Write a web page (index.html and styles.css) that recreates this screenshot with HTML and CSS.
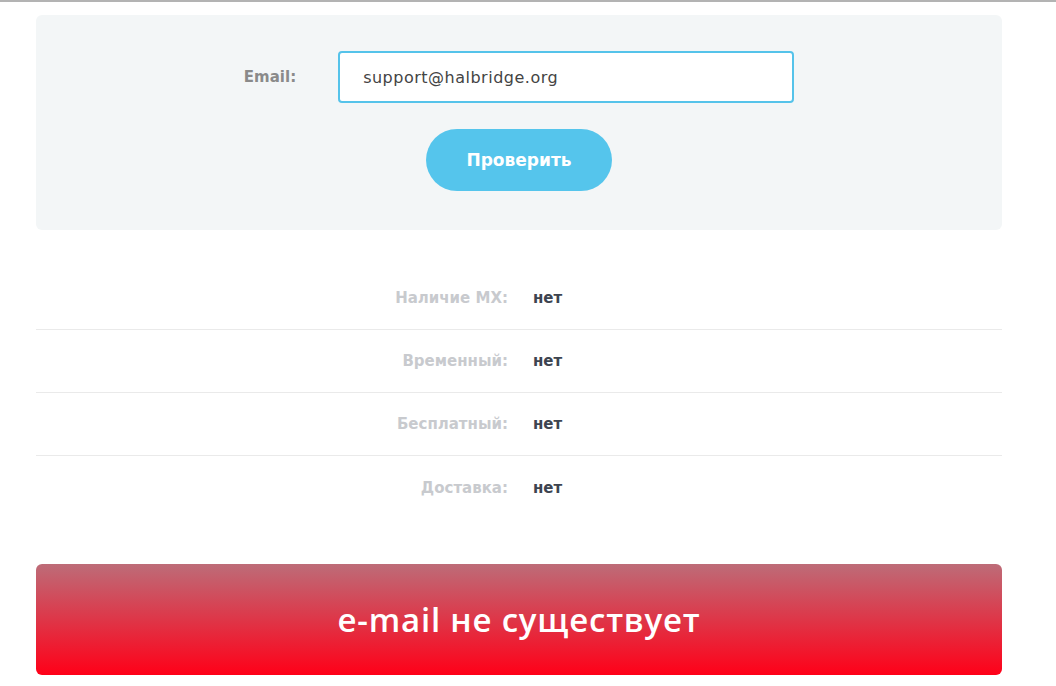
FILE: index.html
```html
<!DOCTYPE html>
<html lang="ru">
  <head>
    <meta charset="UTF-8" />
    <meta name="viewport" content="width=device-width, initial-scale=1.0" />
    <link rel="stylesheet" href="styles.css">
    <title>Проверка e-mail</title>
  </head>
  <body>
    <div class="page">
      <form class="check" onsubmit="return false" novalidate autocapitalize="off">
        <div class="field">
          <label for="email" class="info">Email:</label>
          <input type="email" id="email" class="sub" value="support@halbridge.org" />
        </div>
        <div class="btn">
          <button type="submit">Проверить</button>
        </div>
      </form>

      <div class="result">
        <div class="row">
          <span class="name">Наличие MX:</span>
          <span class="val">нет</span>
        </div>
        <div class="row">
          <span class="name">Временный:</span>
          <span class="val">нет</span>
        </div>
        <div class="row">
          <span class="name">Бесплатный:</span>
          <span class="val">нет</span>
        </div>
        <div class="row">
          <span class="name">Доставка:</span>
          <span class="val">нет</span>
        </div>
      </div>

      <div class="status">e-mail не существует</div>
    </div>
  </body>
</html>
```

FILE: styles.css
```css
* {
  margin: 0;
  padding: 0;
  box-sizing: border-box;
}
body {
  font-family: "DejaVu Sans", "Open Sans", sans-serif;
  border-top: 2px solid rgb(179, 179, 179);
  background: #fff;
}
.page {
  width: 966px;
  margin: 13px 36px 0;
}
.check {
  background-color: rgb(243, 246, 247);
  border-radius: 6px;
  padding: 36px 0 39px;
}
.check .field {
  display: flex;
  align-items: center;
  justify-content: center;
  gap: 40px;
}
.check .info {
  font-size: 15px;
  font-weight: 600;
  color: rgb(138, 138, 138);
  margin-right: 2px;
}
.check .sub {
  width: 456px;
  height: 52px;
  padding: 0 23px;
  border: 2px solid rgb(85, 195, 234);
  border-radius: 4px;
  font-family: "DejaVu Sans", sans-serif;
  font-size: 16px;
  letter-spacing: 0.5px;
  color: rgb(68, 68, 68);
  outline: none;
}
.check .btn {
  display: flex;
  justify-content: center;
  margin-top: 26px;
}
.check button {
  width: 186px;
  height: 62px;
  border: none;
  border-radius: 31px;
  background-color: rgb(85, 197, 236);
  color: #fff;
  font-family: "DejaVu Sans", sans-serif;
  font-size: 17px;
  font-weight: 700;
  cursor: pointer;
}
.result {
  margin-top: 37px;
}
.row {
  display: grid;
  grid-template-columns: 472px 1fr;
  gap: 25px;
  align-items: center;
  height: 63px;
  border-bottom: 1px solid rgb(234, 234, 234);
}
.row:last-child {
  border-bottom: none;
}
.row .name {
  text-align: right;
  font-size: 15px;
  font-weight: 700;
  color: rgb(200, 202, 206);
}
.row .val {
  font-size: 15px;
  font-weight: 700;
  color: rgb(61, 68, 80);
}
.status {
  margin-top: 45px;
  height: 111px;
  border-radius: 6px;
  background: linear-gradient(to bottom, rgb(189, 108, 120), rgb(255, 0, 24));
  display: flex;
  align-items: center;
  justify-content: center;
  color: #fff;
  font-family: "Open Sans", sans-serif;
  font-size: 33px;
  font-weight: 600;
  letter-spacing: 0.8px;
}
```
